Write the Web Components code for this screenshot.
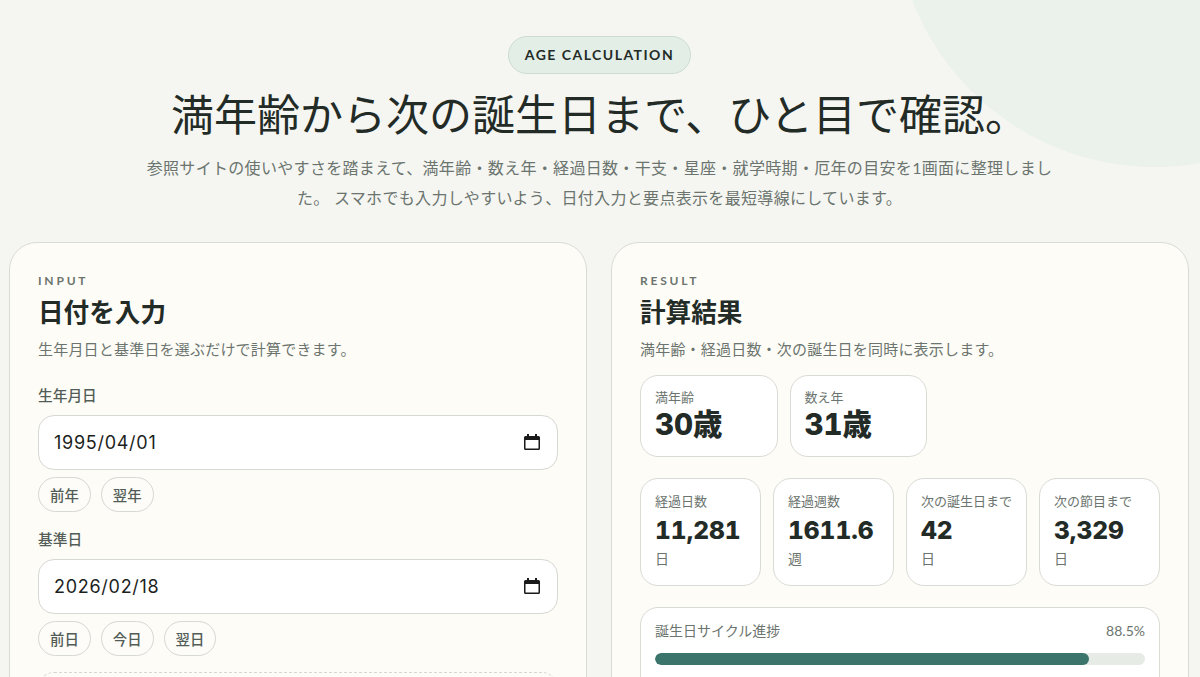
<!DOCTYPE html>
<html lang="ja">
<head>
<meta charset="utf-8">
<title>年齢計算</title>
<style>
  html, body { margin: 0; height: 100%; overflow: hidden; }
  body {
    background: #f5f6f2;
    color: #232b27;
    font-family: Lato, "Noto Sans CJK JP", sans-serif;
  }
</style>
</head>
<body>
<age-page>
  <age-hero slot="hero" badge="AGE CALCULATION" heading="満年齢から次の誕生日まで、ひと目で確認。">
    参照サイトの使いやすさを踏まえて、満年齢・数え年・経過日数・干支・星座・就学時期・厄年の目安を1画面に整理しました。 スマホでも入力しやすいよう、日付入力と要点表示を最短導線にしています。
  </age-hero>

  <age-panel slot="panels" eyebrow="INPUT" heading="日付を入力" note="生年月日と基準日を選ぶだけで計算できます。">
    <date-field label="生年月日" value="1995/04/01">
      <chip-button>前年</chip-button>
      <chip-button>翌年</chip-button>
    </date-field>
    <date-field label="基準日" value="2026/02/18">
      <chip-button>前日</chip-button>
      <chip-button>今日</chip-button>
      <chip-button>翌日</chip-button>
    </date-field>
    <dashed-box></dashed-box>
  </age-panel>

  <age-panel slot="panels" eyebrow="RESULT" heading="計算結果" note="満年齢・経過日数・次の誕生日を同時に表示します。">
    <div style="display:flex;gap:12px;margin-bottom:21px">
      <stat-card big label="満年齢" value="30歳"></stat-card>
      <stat-card big label="数え年" value="31歳"></stat-card>
    </div>
    <div style="display:grid;grid-template-columns:repeat(4,1fr);gap:12px;margin-bottom:21px">
      <stat-card label="経過日数" value="11,281" unit="日"></stat-card>
      <stat-card label="経過週数" value="1611.6" unit="週"></stat-card>
      <stat-card label="次の誕生日まで" value="42" unit="日"></stat-card>
      <stat-card label="次の節目まで" value="3,329" unit="日"></stat-card>
    </div>
    <progress-card label="誕生日サイクル進捗" percent="88.5"></progress-card>
  </age-panel>
</age-page>

<script>
// Small helper: every element here only needs an open shadow root with fixed markup.
class Base extends HTMLElement {
  connectedCallback() {
    if (this.shadowRoot) return
    this.attachShadow({ mode: 'open' }).innerHTML = this.markup()
  }
  attr(name) { return this.getAttribute(name) || '' }
}

class AgePage extends Base {
  markup() {
    return `
      <style>
        :host { display: block; position: relative; height: 677px; overflow: hidden; padding: 36px 10px 0 9px; box-sizing: border-box; }
        .blob {
          position: absolute; left: 895px; top: -353px; width: 520px; height: 520px;
          border-radius: 50%; background: #ebf1eb;
        }
        .inner { position: relative; }
        .panels { display: grid; grid-template-columns: 578px 578px; gap: 24px; margin-top: 29px; }
      </style>
      <div class="blob"></div>
      <div class="inner">
        <slot name="hero"></slot>
        <div class="panels"><slot name="panels"></slot></div>
      </div>`
  }
}

class AgeHero extends Base {
  markup() {
    return `
      <style>
        :host { display: block; text-align: center; }
        .badge {
          display: inline-block; box-sizing: border-box; height: 38px; line-height: 36px; padding: 0 16px;
          border: 1px solid #ccdcd2; border-radius: 999px; background: #e3eee7;
          font-size: 14px; font-weight: 700; letter-spacing: 1.47px; color: #232b27;
        }
        h1 {
          margin: 11px 0 0; font-size: 43px; line-height: 60px; font-weight: 400; color: #232b27;
          white-space: nowrap;
        }
        p {
          margin: 8px auto 0; width: 912px; font-size: 16px; letter-spacing: 0.32px; line-height: 30px; color: #6b746e;
        }
      </style>
      <span class="badge">${this.attr('badge')}</span>
      <h1>${this.attr('heading')}</h1>
      <p><slot></slot></p>`
  }
}

class AgePanel extends Base {
  markup() {
    return `
      <style>
        :host {
          display: block; box-sizing: border-box; height: 520px; padding: 30px 28px 0 28px;
          border: 1px solid #d9dbd5; border-radius: 28px; background: #fefcf7;
        }
        .eyebrow { font-size: 12px; line-height: 16px; font-weight: 700; letter-spacing: 2.8px; color: #6b746e; }
        h2 { margin: 5px 0 0; font-size: 25.6px; line-height: 36px; font-weight: 700; color: #232b27; }
        .note { margin: 8px 0 15px; font-size: 15px; letter-spacing: 0.2px; line-height: 22px; color: #6b746e; white-space: nowrap; }
      </style>
      <div class="eyebrow">${this.attr('eyebrow')}</div>
      <h2>${this.attr('heading')}</h2>
      <div class="note">${this.attr('note')}</div>
      <slot></slot>`
  }
}

class DateField extends Base {
  markup() {
    return `
      <style>
        :host { display: block; margin-bottom: 16px; }
        :host(:first-of-type) { padding-top: 9px; }
        label { display: block; font-size: 14.7px; line-height: 22px; font-weight: 500; color: #535d57; margin: 0 0 9px; }
        .box {
          display: flex; align-items: center; justify-content: space-between; box-sizing: border-box;
          height: 55px; padding: 0 17px 0 15px;
          border: 1px solid #d6d8d2; border-radius: 16px; background: #fff;
          font-family: Inter, "Noto Sans CJK JP", sans-serif; font-size: 18px; letter-spacing: 0.72px; color: #1c1f1d;
        }
        svg { display: block; margin-top: -1px; }
        .chips { display: flex; gap: 10px; margin-top: 7px; }
      </style>
      <label>${this.attr('label')}</label>
      <div class="box">
        <span>${this.attr('value')}</span>
        <svg width="16" height="18" viewBox="0 0 16 18" aria-hidden="true">
          <path d="M3 1h2v2h6V1h2v2h1.5A1.5 1.5 0 0 1 16 4.500V15.500A1.500 1.500 0 0 1 14.500 17h-13A1.500 1.500 0 0 1 0 15.500V4.500A1.500 1.500 0 0 1 1.500 3H3zM1.500 7v8.500h13V7z" fill="#1a1a1a"/>
        </svg>
      </div>
      <div class="chips"><slot></slot></div>`
  }
}

class ChipButton extends Base {
  markup() {
    return `
      <style>
        :host {
          display: inline-flex; align-items: center; justify-content: center; box-sizing: border-box;
          height: 35px; padding: 0 11px;
          border: 1px solid #d6d8d2; border-radius: 999px; background: #fdfcf8;
          font-size: 14.4px; font-weight: 500; color: #535d57;
        }
      </style>
      <slot></slot>`
  }
}

class DashedBox extends Base {
  markup() {
    return `
      <style>
        :host { display: block; height: 80px; border: 1px dashed #d6d8d2; border-radius: 16px; }
      </style>`
  }
}

class StatCard extends Base {
  markup() {
    const big = this.hasAttribute('big')
    return `
      <style>
        :host {
          display: block; box-sizing: border-box; background: #fff;
          border: 1px solid #d9dbd5; border-radius: 18px;
          ${big ? 'width: 137.5px; height: 82px; padding: 12px 14px 0;' : 'height: 108px; padding: 13px 14px 0;'}
        }
        .label { font-size: 13px; line-height: 18px; color: #6b746e; white-space: nowrap; }
        .value {
          font-family: Inter, "Noto Sans CJK JP", sans-serif; font-variant-numeric: tabular-nums;
          font-weight: 800; color: #232b27; white-space: nowrap;
          ${big ? 'font-size: 29.5px; line-height: 38px; margin-top: -1px;' : 'font-size: 24.5px; line-height: 36px; margin-top: 2px;'}
        }
        .unit { margin-top: 1px; font-size: 14px; line-height: 20px; color: #6b746e; }
      </style>
      <div class="label">${this.attr('label')}</div>
      <div class="value">${this.attr('value')}</div>
      ${big ? '' : `<div class="unit">${this.attr('unit')}</div>`}`
  }
}

class ProgressCard extends Base {
  markup() {
    const pct = this.attr('percent')
    return `
      <style>
        :host {
          display: block; box-sizing: border-box; height: 100px; padding: 13px 14px 0;
          background: #fff; border: 1px solid #d9dbd5; border-radius: 18px;
        }
        .head { display: flex; justify-content: space-between; font-size: 14px; line-height: 20px; color: #6b746e; }
        .track { height: 12px; margin-top: 12px; border-radius: 999px; background: #e7ebe5; overflow: hidden; }
        .fill { height: 100%; border-radius: 999px; background: #3a746b; }
      </style>
      <div class="head"><span>${this.attr('label')}</span><span>${pct}%</span></div>
      <div class="track"><div class="fill" style="width:${pct}%"></div></div>`
  }
}

customElements.define('age-page', AgePage)
customElements.define('age-hero', AgeHero)
customElements.define('age-panel', AgePanel)
customElements.define('date-field', DateField)
customElements.define('chip-button', ChipButton)
customElements.define('dashed-box', DashedBox)
customElements.define('stat-card', StatCard)
customElements.define('progress-card', ProgressCard)
</script>
</body>
</html>
